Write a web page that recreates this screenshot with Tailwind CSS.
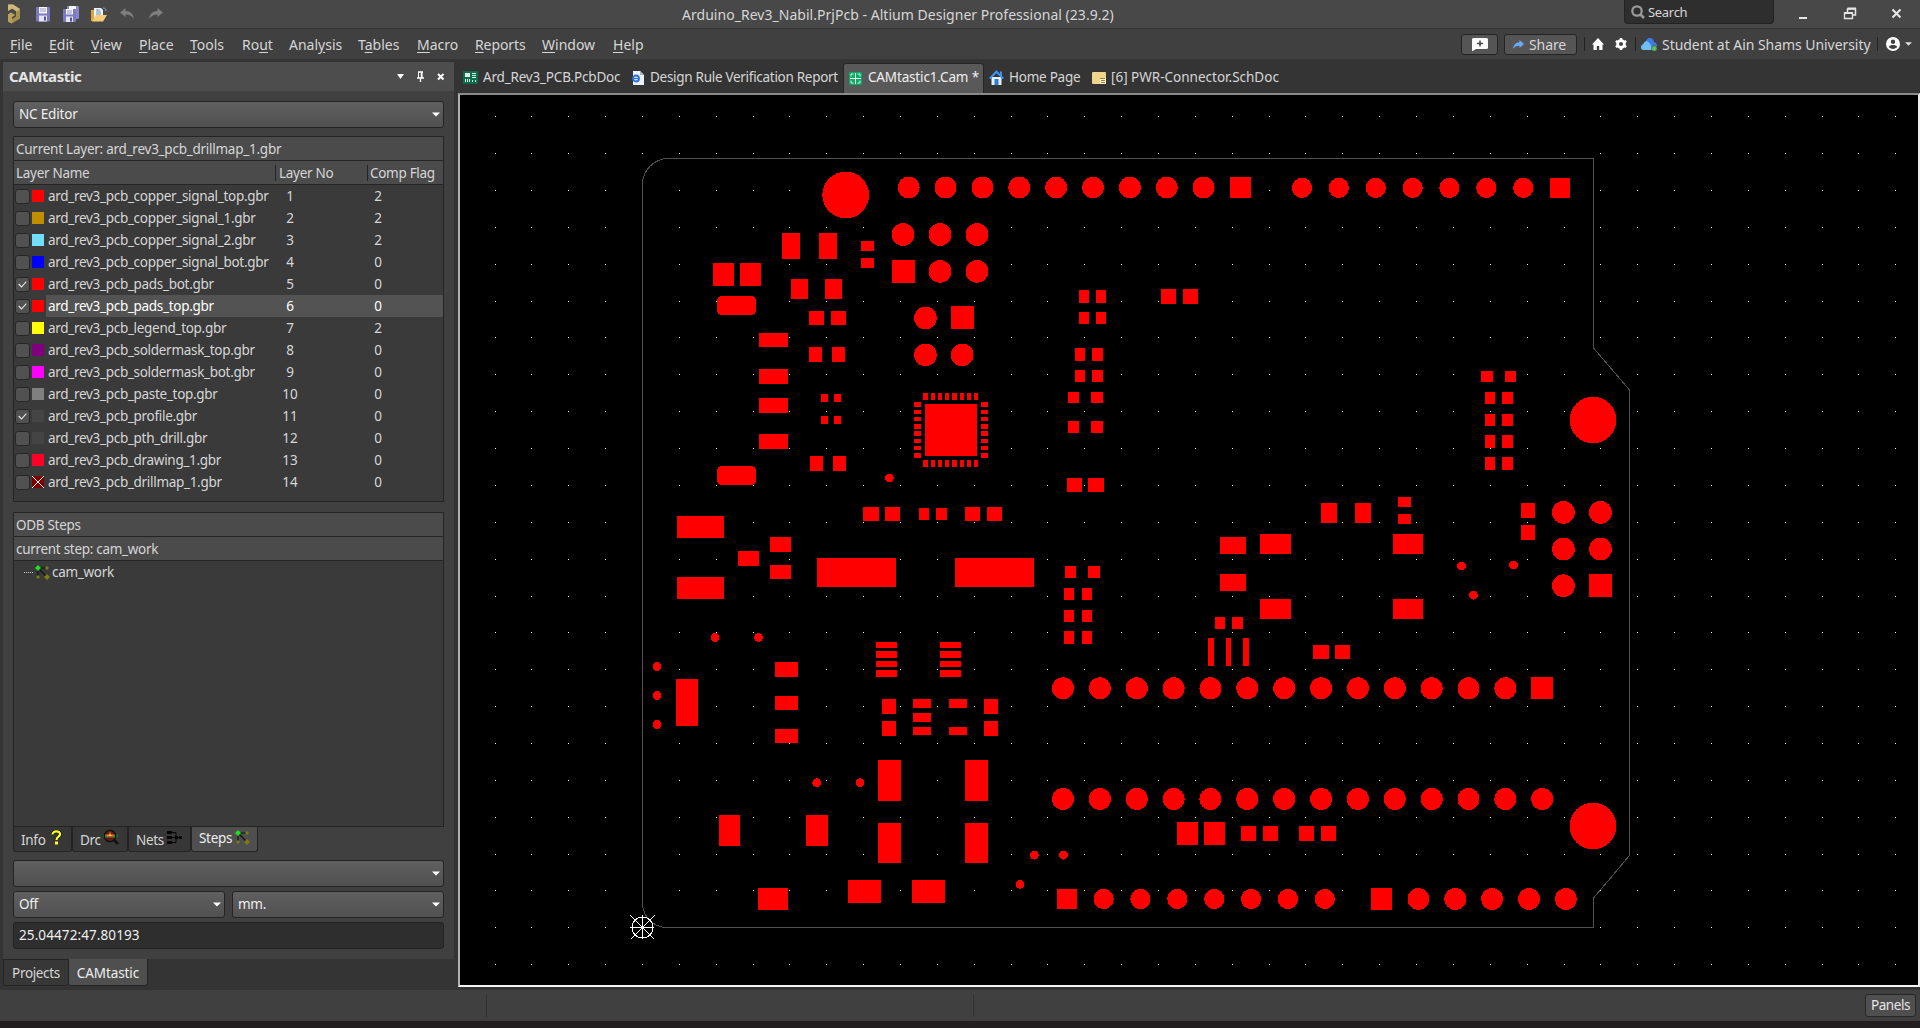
<!DOCTYPE html>
<html lang="en">
<head>
<meta charset="utf-8">
<title>Arduino_Rev3_Nabil.PrjPcb - Altium Designer Professional (23.9.2)</title>
<script src="https://cdn.jsdelivr.net/npm/@tailwindcss/browser@4"></script>
</head>
<body class="flex h-[1028px] w-[1920px] flex-col overflow-hidden bg-[#343434] font-['Noto_Sans',sans-serif] text-[13.5px] leading-none whitespace-nowrap text-[#d6d6d6]">

<!-- Title bar -->
<header class="flex h-[29px] shrink-0 items-start border-b border-[#333] bg-[#484848]">
  <div class="flex h-7 w-[682px] items-center pl-[7px]">
    <svg class="h-5 w-[14px]" viewBox="0 0 14 20"><path d="M1 .5h5l7 4.500v9.500L5 19.500l-4-2v-7l3-2 4 2.500-3 2v2l4-2.500V7L5 4.500 1 7z" fill="#a58f4b"/><path d="M1 .5h5l7 4.500-3 2.500L5 4.500 1 7z" fill="#cfba76"/><path d="M1 10.500l3-2 4 2.500-3 2v6.500l-4-2z" fill="#b8a25c"/></svg>
    <svg class="ml-[15px] h-[15px] w-[14px]" viewBox="0 0 14 15"><rect width="14" height="14.500" rx="1" fill="#7c79c0"/><rect x="3" width="8" height="6.500" fill="#f5f5ff"/><path d="M4 2h6M4 4h6" stroke="#9997c8"/><rect x="3" y="8.500" width="8" height="6" fill="#e4e4f4"/><rect x="8" y="9.500" width="2" height="4" fill="#5552a0"/></svg>
    <svg class="ml-[13px] h-4 w-4" viewBox="0 0 16 16"><rect x="4" width="12" height="13" rx="1" fill="#8a87c8"/><rect x="6" width="7" height="3" fill="#f5f5ff"/><rect x="0" y="3" width="13" height="13" rx="1" fill="#7c79c0"/><rect x="3" y="3" width="7" height="5.500" fill="#f5f5ff"/><path d="M4 5h5M4 7h5" stroke="#9997c8"/><rect x="3" y="10.500" width="7" height="5.500" fill="#e4e4f4"/><rect x="7" y="11.500" width="2" height="4" fill="#5552a0"/></svg>
    <svg class="ml-[12px] h-[15px] w-4" viewBox="0 0 16 15"><path d="M0 3h4l1 2h6v9H0z" fill="#d9a441"/><path d="M3 1h7l2 2v8H3z" fill="#eef3f8"/><path d="M5 3h4M5 5h5M5 7h5" stroke="#6f93b5"/><path d="M1 14.500L5 8h11l-4 6.500z" fill="#f6cd76"/><path d="M12 1c2 0 3 1 3 3" stroke="#7fa6cc" fill="none"/></svg>
    <svg class="ml-[13px] h-3 w-[15px]" viewBox="0 0 15 12"><path d="M0 4.500L5.500 0v3c5 0 8 3 8.500 8-2-3-4.500-4.500-8.500-4.500V9z" fill="#7e7e7e"/></svg>
    <svg class="ml-[13px] h-3 w-[15px]" viewBox="0 0 15 12"><path d="M15 4.500L9.500 0v3C4.500 3 1.500 6 1 11c2-3 4.500-4.500 8.500-4.500V9z" fill="#7e7e7e"/></svg>
  </div>
  <div class="flex h-[29px] w-[942px] items-center text-[14px] tracking-[0.03px]">Arduino_Rev3_Nabil.PrjPcb - Altium Designer Professional (23.9.2)</div>
  <div class="flex h-6 w-[150px] items-center gap-[3px] rounded-b border border-t-0 border-[#222] bg-[#2e2e2e] pl-[6px] text-[13px] tracking-[-0.3px]">
    <svg class="h-[14px] w-[14px]" viewBox="0 0 14 14"><circle cx="6" cy="6" r="4.700" fill="none" stroke="#9a9a9a" stroke-width="2.300"/><path d="M9.500 9.500L13 13" stroke="#9a9a9a" stroke-width="2.600"/></svg><span class="pt-px">Search</span>
  </div>
  <svg class="h-7 w-[146px]" viewBox="0 0 146 28" fill="none" stroke="#e6e6e6"><path d="M25 18h8" stroke-width="2"/><path d="M73.500 12V9H81.500v6H79" stroke-width="1.500"/><path d="M73.500 8.500h8.500" stroke-width="2"/><path d="M70.500 13h8v5.500h-8z" stroke-width="1.300"/><path d="M70 13h9" stroke-width="2"/><path d="M118.500 9.500l8 8M126.500 9.500l-8 8" stroke-width="2.100"/></svg>
</header>

<!-- Menu bar -->
<nav class="flex h-[30px] shrink-0 items-center bg-[#404040] pl-[10px] text-[14px]">
  <div class="flex pt-[2px]">
    <span class="w-[39px]"><u class="underline-offset-2">F</u>ile</span>
    <span class="w-[42px]"><u class="underline-offset-2">E</u>dit</span>
    <span class="w-[48px]"><u class="underline-offset-2">V</u>iew</span>
    <span class="w-[51px]"><u class="underline-offset-2">P</u>lace</span>
    <span class="w-[52px]"><u class="underline-offset-2">T</u>ools</span>
    <span class="w-[47px]">Ro<u class="underline-offset-2">u</u>t</span>
    <span class="w-[69px]">Anal<u class="underline-offset-2">y</u>sis</span>
    <span class="w-[59px]">T<u class="underline-offset-2">a</u>bles</span>
    <span class="w-[58px]"><u class="underline-offset-2">M</u>acro</span>
    <span class="w-[67px] tracking-[-0.1px]"><u class="underline-offset-2">R</u>eports</span>
    <span class="w-[71px]"><u class="underline-offset-2">W</u>indow</span>
    <span class="w-[848px]"><u class="underline-offset-2">H</u>elp</span>
  </div>
  <span class="flex h-[21px] w-[37px] items-center justify-center rounded-[3px] border border-[#242424] bg-[#555]">
    <svg class="h-[13px] w-4" viewBox="0 0 16 13"><path d="M1.500 0h13a1.500 1.500 0 0 1 1.500 1.500v8a1.500 1.500 0 0 1-1.500 1.500H4l-4 2.500v-12A1.500 1.500 0 0 1 1.500 0z" fill="#fff"/><path d="M8 2.500v6M5 5.500h6" stroke="#444" stroke-width="1.500"/></svg>
  </span>
  <span class="ml-[6px] flex h-[21px] w-[73px] items-center gap-[5px] rounded-[3px] border border-[#242424] bg-[#555] pl-[8px] tracking-[-0.1px]">
    <svg class="h-[9px] w-[11px]" viewBox="0 0 11 9"><path d="M11 4L6.500 0v2.300C2.500 2.500.5 5 0 9c1.500-2.500 3.500-3.300 6.500-3.300V8z" fill="#6aaaf5"/></svg><span class="pt-px">Share</span>
  </span>
  <span class="ml-[7px] h-[14px] w-px bg-[#222]"></span>
  <svg class="ml-[7px] h-3 w-3" viewBox="0 0 12 12"><path d="M6 0L0 6.500h1.500V12h3.300V8h2.400v4h3.300V6.500H12z" fill="#fff"/></svg>
  <svg class="ml-[11px] h-3 w-3" viewBox="0 0 12 12"><circle cx="6" cy="6" r="3.400" fill="none" stroke="#fff" stroke-width="2.800"/><path d="M6 0v2M6 10v2M.8 3l1.700 1M9.500 8l1.700 1M.8 9l1.700-1M9.500 4l1.700-1" stroke="#fff" stroke-width="2.600"/></svg>
  <span class="ml-[8px] h-[14px] w-px bg-[#222]"></span>
  <svg class="ml-[5px] h-[13px] w-4" viewBox="0 0 16 13"><path d="M4 6C4.500 2.500 6 0 9 0c2 0 3.500 1.500 4 4 2 .5 3 2 3 4l-3 4H8z" fill="#3d7be8"/><path d="M2.500 12C1 12 0 11 0 9.500c0-2 1-3 2.500-3.500.5-2 2-3 4-2.500C8.500 4 9 6 10 7.500L12 12z" fill="#6ec0f2"/><circle cx="13.300" cy="10.400" r="2.800" fill="#5fbf5a" stroke="#404040" stroke-width=".6"/></svg>
  <span class="ml-[5px] w-[215px] pt-px tracking-[-0.05px]">Student at Ain Shams University</span>
  <span class="h-[14px] w-px bg-[#222]"></span>
  <svg class="ml-[8px] h-[14px] w-[14px]" viewBox="0 0 14 14"><circle cx="7" cy="7" r="7" fill="#fff"/><circle cx="7" cy="4.800" r="2.200" fill="#404040"/><path d="M2.800 9.800c1.200-2.300 7.200-2.300 8.400 0-1.700 2.800-6.700 2.800-8.400 0z" fill="#404040"/></svg>
  <svg class="ml-[5px] h-1 w-[7px]" viewBox="0 0 8 4"><path d="M0 0h8L4 4z" fill="#ddd"/></svg>
</nav>

<main class="flex h-[931px] shrink-0">
  <!-- CAMtastic panel -->
  <aside class="w-[458px] shrink-0 pt-[3px] pl-[3px] tracking-[-0.3px]">
    <div class="w-[451px]">
      <div class="flex h-[29px] items-center bg-[#4d4d4d] pl-[6px] text-[15px] font-bold tracking-[-0.4px] text-[#e4e4e4]">
        <span class="w-[388px]">CAMtastic</span>
        <svg class="h-[11px] w-[50px]" viewBox="0 0 50 11"><path d="M0 3h7L3.500 8z" fill="#fff"/><path d="M21 1h5M20 7h7M23.500 7v4" stroke="#fff" stroke-width="1.300"/><path d="M21.500 1v6M25 1v6" stroke="#fff"/><path d="M24.500 1v6" stroke="#fff" stroke-width="1.500"/><path d="M41 3l5.500 5.500M46.500 3L41 8.500" stroke="#fff" stroke-width="2"/></svg>
      </div>
      <div class="h-[868px] bg-[#404040] px-[10px] pt-[10px]">
        <div class="flex h-[27px] items-center justify-between rounded-[3px] border border-[#242424] bg-linear-to-b from-[#606060] to-[#505050] pr-[3px] pl-[5px] text-[#eee]"><span class="pt-px tracking-[-0.18px]">NC Editor</span>
          <svg class="h-[5px] w-2" viewBox="0 0 8 5"><path d="M0 .5h8L4 4.500z" fill="#fff"/></svg>
        </div>

        <div class="mt-[8px] h-[366px] border border-[#242424] bg-[#3a3a3a]">
          <div class="flex h-6 items-center border-b border-[#242424] bg-[#4b4b4b] pt-[2px] pl-[2px] tracking-[-0.25px]">Current Layer: ard_rev3_pcb_drillmap_1.gbr</div>
          <div class="flex h-6 items-center border-b border-[#242424] bg-[#4b4b4b] pl-[2px]">
            <span class="w-[259px] pt-[2px]">Layer Name</span>
            <span class="flex h-4 w-[92px] items-center border-l border-[#242424] pt-[2px] pl-[3px]">Layer No</span>
            <span class="flex h-4 items-center border-l border-[#242424] pt-[2px] pl-[2px]">Comp Flag</span>
          </div>
          <div id="layers"></div>
        </div>

        <div class="mt-[10px] h-[315px] border border-[#242424] bg-[#3a3a3a]">
          <div class="flex h-6 items-center border-b border-[#242424] bg-[#4b4b4b] pt-[2px] pl-[2px]">ODB Steps</div>
          <div class="flex h-6 items-center border-b border-[#242424] bg-[#4b4b4b] pt-[2px] pl-[2px]">current step: cam_work</div>
          <div class="flex h-[23px] items-center pl-[10px]">
            <span class="h-px w-[9px] border-t border-dotted border-[#ccc]"></span>
            <svg class="mx-[2px] h-[15px] w-[15px]" viewBox="0 0 15 15"><path d="M3 3h9M3 3v9M3 3l9 9" stroke="#111" stroke-width="1.200"/><path d="M3 0l3 3-3 3-3-3z" fill="#1fe01f"/><path d="M12 1l2 2-2 2-2-2zM3 10l2 2-2 2-2-2zM12 9l3 3-3 3-3-3z" fill="#7c7c14"/></svg><span class="pt-px">cam_work</span>
          </div>
        </div>

        <div class="flex h-[25px] items-start">
          <span class="flex h-[25px] w-[59px] items-center rounded-b-[3px] border border-t-0 border-[#242424] bg-[#373737] pt-1 pl-[7px]">Info
            <svg class="mb-2 ml-[5px] h-[15px] w-[11px]" viewBox="0 0 11 15"><path d="M1.500 4.500C1.500 0 9.500.5 9 4.500 8.700 7 5.500 6.500 5.500 10" fill="none" stroke="#111" stroke-width="3.600"/><path d="M1.500 4.500C1.500 0 9.500.5 9 4.500 8.700 7 5.500 6.500 5.500 10" fill="none" stroke="#ffff20" stroke-width="2.200"/><rect x="4" y="11.500" width="3" height="3" fill="#ffff20"/></svg></span>
          <span class="flex h-[25px] w-[56px] items-center rounded-b-[3px] border border-t-0 border-[#242424] bg-[#373737] pt-1 pl-[7px]">Drc
            <svg class="mb-2 ml-[2px] h-4 w-4" viewBox="0 0 16 16"><path d="M0 7h15" stroke="#1d7a36" stroke-width="3"/><circle cx="7" cy="7" r="5.700" fill="#5a2018" stroke="#111" stroke-width="1.500"/><path d="M2 7h10" stroke="#3a8c3a" stroke-width="3"/><path d="M7 3l1.200 2.700 2.800.3-2 1.500H5L3 6l2.800-.3z" fill="#f2c22c" stroke="#e0301e" stroke-width=".8"/><path d="M11 11l4 4" stroke="#111" stroke-width="2.500"/></svg></span>
          <span class="flex h-[25px] w-[63px] items-center rounded-b-[3px] border border-t-0 border-[#242424] bg-[#373737] pt-1 pl-[7px]">Nets
            <svg class="mb-2 ml-[3px] h-[13px] w-[15px]" viewBox="0 0 15 13" fill="#050505"><path d="M0 0h5v3H0zM0 5h5v3H0zM0 10h5v3H0zM8 5h3v3H8zM12 5h3v3h-3z"/><path d="M5 1.500h4v10H5M5 6.500h9" fill="none" stroke="#050505"/></svg></span>
          <span class="flex h-[25px] w-[67px] items-center rounded-b-[3px] border border-t-0 border-[#242424] bg-[#4f4f4f] pl-[7px] text-[#eee]">Steps
            <svg class="mb-1 ml-[3px] h-[15px] w-[15px]" viewBox="0 0 15 15"><path d="M3 3h9M3 3v9M3 3l9 9" stroke="#111" stroke-width="1.200"/><path d="M3 0l3 3-3 3-3-3z" fill="#1fe01f"/><path d="M12 1l2 2-2 2-2-2zM3 10l2 2-2 2-2-2zM12 9l3 3-3 3-3-3z" fill="#7c7c14"/></svg></span>
        </div>

        <div class="mt-[8px] flex h-[27px] items-center justify-end rounded-[3px] border border-[#242424] bg-linear-to-b from-[#606060] to-[#505050] pr-[3px]"><svg class="h-[5px] w-2" viewBox="0 0 8 5"><path d="M0 .5h8L4 4.500z" fill="#fff"/></svg></div>
        <div class="mt-1 flex gap-[7px]">
          <div class="flex h-[27px] flex-1 items-center justify-between rounded-[3px] border border-[#242424] bg-linear-to-b from-[#606060] to-[#505050] pr-[3px] pl-[5px] text-[#eee]">Off<svg class="h-[5px] w-2" viewBox="0 0 8 5"><path d="M0 .5h8L4 4.500z" fill="#fff"/></svg></div>
          <div class="flex h-[27px] flex-1 items-center justify-between rounded-[3px] border border-[#242424] bg-linear-to-b from-[#606060] to-[#505050] pr-[3px] pl-[5px] text-[#eee]">mm.<svg class="h-[5px] w-2" viewBox="0 0 8 5"><path d="M0 .5h8L4 4.500z" fill="#fff"/></svg></div>
        </div>
        <div class="mt-1 flex h-[27px] items-center rounded-[3px] border border-[#222] bg-[#2e2e2e] pl-[5px] tracking-[0.1px] text-[#eee]">25.04472:47.80193</div>
      </div>
      <div class="flex h-[27px]">
        <span class="flex w-[66px] items-center justify-center rounded-b-[3px] border border-[#242424] bg-[#373737] pt-[2px] tracking-[-0.35px]">Projects</span>
        <span class="flex w-[79px] items-center justify-center rounded-b-[3px] border border-t-0 border-l-0 border-[#242424] bg-[#4f4f4f] pt-[3px] tracking-[-0.1px] text-[#eee]">CAMtastic</span>
      </div>
    </div>
  </aside>

  <section class="flex w-[1462px] flex-col">
    <!-- Document tabs -->
    <div class="flex h-[34px] items-center pt-[3px]">
      <div class="flex w-[173px] items-center pl-[5px] tracking-[-0.19px]">
        <svg class="mr-[5px] h-[13px] w-[15px]" viewBox="0 0 15 13"><rect width="15" height="13" rx="1" fill="#0f6b4c"/><path d="M2 2h5v4H2zM2 8h1v3H2zM4 8h1v3H4zM6 8h1v3H6zM9 2h4v1H9zM9 4h4v1H9zM9 6h4v1H9zM9 9h1v2H9zM12 9h1v2h-1z" fill="#d8f0e6"/></svg>Ard_Rev3_PCB.PcbDoc</div>
      <div class="flex w-[212px] items-center pl-px tracking-[-0.29px]">
        <svg class="mr-[6px] h-[14px] w-3" viewBox="0 0 12 14"><path d="M1 0h7l4 4v10H1z" fill="#eaf1fa"/><path d="M8 0v4h4z" fill="#9fb6d0"/><circle cx="4" cy="7.500" r="3" fill="none" stroke="#2a72d8" stroke-width="1.800"/><path d="M2 7.500h5" stroke="#2a72d8" stroke-width="1.300"/></svg>Design Rule Verification Report</div>
      <div class="flex h-[30px] w-[141px] items-center rounded-t-[3px] border border-b-0 border-[#262626] bg-[#595959] pl-[5px] tracking-[-0.16px] text-[#f0f0f0]">
        <svg class="mr-[6px] h-[13px] w-[13px]" viewBox="0 0 13 13"><rect width="13" height="13" rx="1" fill="#0fa868"/><path d="M2 4.500V2h2.500M8.500 2H11v2.500M2 8.500V11h2.500M8.500 11H11V8.500" fill="none" stroke="#c9f5de"/><path d="M6.500 1v11M1 6.500h11" stroke="#e9fff4"/></svg>CAMtastic1.Cam *</div>
      <div class="flex w-[108px] items-center pl-[5px] tracking-[-0.25px]">
        <svg class="mr-[5px] h-[15px] w-[15px]" viewBox="0 0 15 15"><path d="M2.500 7h10v8h-10z" fill="#e8f2fd"/><path d="M5.500 9h4v6h-4z" fill="#2f7de0"/><path d="M7.500 0L0 8l1.500 1.300 6-6 6 6L15 8l-2-2V1.500h-2V4z" fill="#3f93f2"/></svg>Home Page</div>
      <div class="flex items-center">
        <svg class="mr-[5px] h-[12px] w-[14px]" viewBox="0 0 14 12"><rect width="14" height="12" rx="1" fill="#f0d48a"/><path d="M8 6h6v6H8z" fill="#fbf2cf"/><path d="M8 6.500h5M9 8.500h4M9 10.500h4" stroke="#a08038"/></svg>[6] PWR-Connector.SchDoc</div>
    </div>
    <!-- CAM drawing area -->
    <div class="h-[894px] border-2 border-t-[#8a8a8a] border-r-[#eeeeee] border-b-[#f4f4f4] border-l-[#b0b0b0] bg-black">
      <svg id="board" class="block h-[890px] w-[1458px]" viewBox="460 95 1458 890" shape-rendering="crispEdges"></svg>
    </div>
  </section>
</main>

<!-- Status bar -->
<footer class="flex h-[31px] shrink-0 items-center bg-[#404040]">
  <span class="ml-[486px] h-[23px] w-px bg-[#323232]"></span>
  <span class="ml-[486px] h-[23px] w-px bg-[#323232]"></span>
  <span class="ml-[891px] flex h-[23px] w-[51px] items-center justify-center rounded-[3px] border border-[#262626] bg-[#4f4f4f] pt-px tracking-[-0.4px] text-[#e6e6e6]">Panels</span>
</footer>
<div class="h-[7px] bg-[#231f20]"></div>

<script>
// Layer table: name, swatch colour, compensation flag, visible
const layers = [
  ['copper_signal_top', '#ff0000', 2, 0], ['copper_signal_1', '#bf8f00', 2, 0], ['copper_signal_2', '#70dcff', 2, 0],
  ['copper_signal_bot', '#0000ff', 0, 0], ['pads_bot', '#ff0000', 0, 1], ['pads_top', '#ff0000', 0, 1],
  ['legend_top', '#ffff00', 2, 0], ['soldermask_top', '#800080', 0, 0], ['soldermask_bot', '#ff00ff', 0, 0],
  ['paste_top', '#808080', 0, 0], ['profile', '#444444', 0, 1], ['pth_drill', '#444444', 0, 0],
  ['drawing_1', '#ff0026', 0, 0], ['drillmap_1', '#800000', 0, 0]
];
document.getElementById('layers').innerHTML = layers.map(([name, color, flag, on], i) => {
  const sel = i === 5;
  return `<div class="flex h-[22px] items-center pl-px">
    <span class="flex h-[15px] w-[15px] items-center justify-center rounded-[3px] border border-[#262626] bg-[#515151]">${on ? '<svg class="h-[7px] w-[9px]" viewBox="0 0 9 7"><path d="M.7 3l2.800 3L8.300.7" fill="none" stroke="#e8e8e8" stroke-width="1.100"/></svg>' : ''}</span>
    <svg class="mr-[2px] ml-[2px] h-3 w-3" viewBox="0 0 12 12"><rect width="12" height="12" fill="${color}"/>${i === 13 ? '<path d="M0 0l12 12M12 0L0 12" stroke="#fff"/>' : ''}</svg>
    <span class="flex h-[22px] flex-1 items-center pt-[2px] pl-[2px] ${sel ? 'bg-[#535353] text-white' : ''}">
      <span class="w-[226px]">ard_rev3_pcb_${name}.gbr</span><span class="w-[32px] text-center tracking-normal">${i + 1}</span><span class="ml-[56px] w-8 text-center">${flag}</span>
    </span></div>`;
}).join('');

// Pads: x, y, width, height
const rects = `1230 177 21 21;1550 178 20 20;892 260 23 23;951 306 23 23;782 233 18 26;819 233 18 26;861 241 13 10;861 258 13 10;
713 263 21 23;740 263 21 23;791 279 17 20;825 279 17 20;809 311 15 14;831 311 15 14;759 333 29 14;809 347 13 15;832 347 13 15;
759 369 29 15;759 398 29 15;821 394 7 8;834 394 7 8;821 416 7 8;834 416 7 8;759 434 29 15;810 456 13 15;833 456 13 15;925 404 52 52;
677 516 47 22;770 537 21 15;738 551 21 15;770 565 21 14;677 577 47 22;863 507 16 14;885 507 15 14;919 508 10 12;936 508 11 12;965 507 15 14;987 507 15 14;
817 558 79 29;955 558 79 29;676 679 22 47;775 662 23 15;775 696 23 14;775 729 23 14;876 642 21 6;876 651 21 7;876 661 21 6;876 670 21 7;
940 642 21 6;940 651 21 7;940 661 21 6;940 670 21 7;882 699 14 15;882 721 14 15;913 699 18 9;913 713 18 9;913 727 18 8;949 699 18 9;949 727 18 8;984 699 14 15;984 721 14 15;
878 760 23 41;965 760 23 41;878 823 23 40;965 823 23 40;719 815 21 31;806 815 22 31;758 888 30 22;848 880 33 23;912 880 33 23;
1079 290 10 13;1096 290 10 13;1079 312 10 12;1096 312 10 12;1161 289 15 15;1183 289 15 15;1075 348 10 13;1092 348 11 13;1075 370 10 12;1092 370 11 12;
1068 392 11 11;1091 392 12 11;1068 421 11 12;1091 421 12 12;1067 478 15 14;1088 478 16 14;1481 371 12 11;1505 371 11 11;
1485 392 10 12;1502 392 11 12;1485 414 10 12;1502 414 11 12;1485 435 10 13;1502 435 11 13;1485 457 10 13;1502 457 11 13;
1321 503 16 20;1355 503 16 20;1398 497 13 10;1398 514 13 10;1220 537 26 17;1220 574 26 17;1260 534 31 20;1260 599 31 20;1393 534 30 20;1393 599 30 20;
1521 503 14 15;1521 525 14 15;1589 574 23 23;1065 566 11 12;1088 566 12 12;1064 588 10 12;1082 588 10 12;1064 610 10 12;1082 610 10 12;1064 631 10 13;1082 631 10 13;
1215 617 10 12;1232 617 11 12;1208 638 6 28;1226 638 5 28;1243 638 6 28;1313 645 16 14;1335 645 15 14;1531 677 22 22;
1177 822 21 23;1204 822 21 23;1241 826 15 15;1263 826 15 15;1299 826 15 15;1321 826 15 15;1057 889 20 20;1371 888 21 22`
  .split(';').map(r => r.trim().split(' ').map(Number));

// QFN pins around the exposed pad
[[923,5],[931,4],[938,4],[945,4],[952,5],[960,4],[967,4],[974,4]].forEach(([x, w]) => rects.push([x, 393, w, 7], [x, 460, w, 7]));
[[402,5],[410,4],[417,4],[424,5],[431,5],[439,4],[446,4],[453,5]].forEach(([y, h]) => rects.push([914, y, 7, h], [981, y, 7, h]));

// Round pads: x, y, radius
const circles = [[845.7,195,23.4],[1593,420,23.4],[1593,826,23.4],
  [903,234.5,11.3],[940,234.5,11.3],[977,234.5,11.3],[940,271.4,11.3],[977,271.4,11.3],[925.4,318,11.3],[925.4,354.9,11.3],[962.2,354.9,11.3],
  [1563.4,512.4,11.4],[1600.4,512.4,11.4],[1563.4,549.1,11.4],[1600.4,549.1,11.4],[1563.4,585.8,11.4],
  [889.3,478,4.4],[715,637.6,4.4],[758.5,637.6,4.4],[657,666.6,4.4],[657,695.6,4.4],[657,724.6,4.4],[816.7,782.7,4.4],[860,782.7,4.4],
  [1034.3,855.2,4.4],[1063.5,855.2,4.4],[1020,884.3,4.4],[1461.6,566,4.4],[1513.5,565,4.4],[1473.5,595.3,4.4]];
const row = (x, y, r, n) => { for (let i = 0; i < n; i++) circles.push([x + i * 36.865, y, r]); };
row(908.7, 187.5, 10.9, 9); row(1302, 187.9, 10.1, 7); row(1063, 688.3, 11, 13); row(1063, 799, 11, 14); row(1103.6, 899, 10.1, 7); row(1418.4, 899, 10.9, 5);

// Visible grid
let dots = '';
for (let i = -4; i <= 34; i++) for (let j = -1; j <= 22; j++)
  dots += `M${Math.floor(642.5 + 36.86 * i)} ${Math.floor(927.8 - 36.865 * j)}h1v1h-1z`;

document.getElementById('board').innerHTML =
  `<path d="${dots}" fill="#fff"/>` +
  `<path d="M669 158.500H1593.500V348L1629.500 390V855.500L1593.500 898V927.500H667A24.500 24.500 0 0 1 642.500 903V184A26 26 0 0 1 669 158.500z" fill="none" stroke="#505050"/>` +
  `<g fill="#f00">` + rects.map(([x, y, w, h]) => `<rect x="${x}" y="${y}" width="${w}" height="${h}"/>`).join('') +
  `<rect x="717" y="296" width="39" height="19" rx="5"/><rect x="717" y="466" width="39" height="19" rx="5"/>` +
  circles.map(([x, y, r]) => `<circle cx="${x}" cy="${y}" r="${r}"/>`).join('') + `</g>` +
  `<g fill="none" stroke="#fff"><circle cx="642.500" cy="927.500" r="10.500"/><path d="M630 927.500h24M642.500 915v24M630.500 915.500l24 24M654.500 915.500l-24 24"/></g>`;
</script>
</body>
</html>
